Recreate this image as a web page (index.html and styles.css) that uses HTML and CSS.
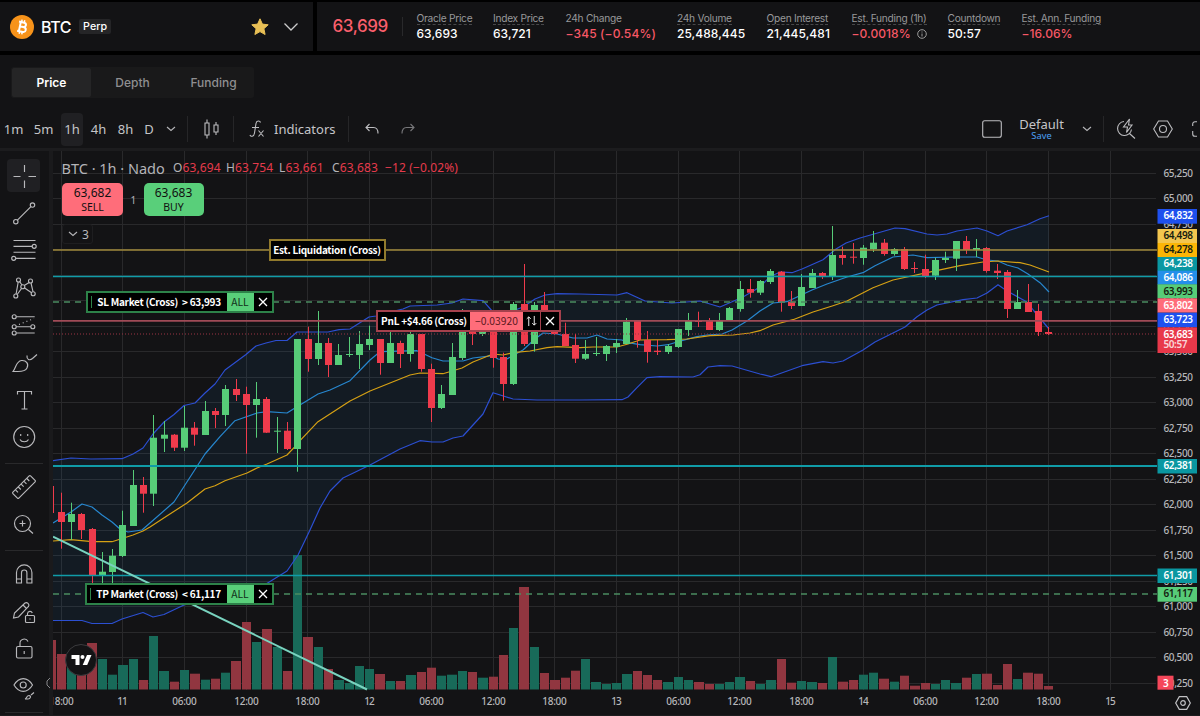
FILE: index.html
```
<!DOCTYPE html>
<html lang="en">
<head>
    <meta charset="UTF-8">
    <meta name="viewport" content="width=device-width, initial-scale=1.0">
    <title>BTC Perp</title>
    <link rel="stylesheet" href="styles.css">
</head>
<body>
    <header class="header">
        <div class="market">
            <svg class="coin" viewBox="0 0 24 24"><circle cx="12" cy="12" r="12" fill="#f7931a"/><g transform="rotate(12 12 12)" fill="none" stroke="#fff" stroke-width="2"><path d="M8 7.3h5.2a2.2 2.2 0 0 1 0 4.5H9.6M9.8 7v10M13.2 11.8h.6a2.4 2.4 0 0 1 0 4.9H8"/><path d="M10.6 4.8v2.5M13.3 4.8v2.5M10.6 16.7v2.5M13.3 16.7v2.5" stroke-width="1.5"/></g></svg>
            <span class="symbol">BTC</span>
            <span class="badge">Perp</span>
            <svg class="star" viewBox="0 0 18 18"><path d="M9 .8l2.4 5.3 5.8.7-4.3 3.9 1.2 5.8L9 13.6l-5.1 2.9 1.2-5.8L.8 6.8l5.8-.7z" fill="#e8bf55" stroke="#e8bf55" stroke-linejoin="round"/></svg>
            <svg class="market-arrow" viewBox="0 0 16 10"><path d="M1.5 1.5L8 8l6.500-6.500" fill="none" stroke="#ccc" stroke-width="1.300"/></svg>
        </div>
        <div class="stats">
            <div class="last-price">63,699</div>
            <div class="stat-list">
                <div class="stat"><span class="label">Oracle Price</span><b>63,693</b></div>
                <div class="stat"><span class="label">Index Price</span><b>63,721</b></div>
                <div class="stat"><span class="label plain">24h Change</span><b class="down wide">−345 (−0.54%)</b></div>
                <div class="stat"><span class="label">24h Volume</span><b>25,488,445</b></div>
                <div class="stat"><span class="label">Open Interest</span><b>21,445,481</b></div>
                <div class="stat"><span class="label">Est. Funding (1h)</span><b class="down">−0.0018% <svg class="info" viewBox="0 0 10 10"><circle cx="5" cy="5" r="4.300"/><path d="M5 4.500v3M5 2.500v1"/></svg></b></div>
                <div class="stat"><span class="label">Countdown</span><b>50:57</b></div>
                <div class="stat"><span class="label">Est. Ann. Funding</span><b class="down">−16.06%</b></div>
            </div>
        </div>
    </header>

    <main class="panel">
        <nav class="tabs">
            <button class="tab active">Price</button>
            <button class="tab">Depth</button>
            <button class="tab">Funding</button>
        </nav>

        <div class="toolbar">
            <div class="intervals">
                <span>1m</span><span>5m</span><span class="active">1h</span><span>4h</span><span>8h</span><span class="day">D</span>
            </div>
            <svg class="small-arrow" viewBox="0 0 10 6"><path d="M1 1l4 3.500L9 1"/></svg>
            <i class="sep"></i>
            <svg class="tool-icon candles" viewBox="0 0 16 20"><path d="M2 4h4v12H2zM4 .5V4M4 16v3.500M11 6h4v7h-4zM13 3v3M13 13v3"/></svg>
            <i class="sep"></i>
            <svg class="tool-icon fx" viewBox="0 0 16 20"><path d="M11.500 3.500C11 1.500 7.500 1 7 4.500L5.500 14c-.5 4-4 4-4.500 2M3 8.500h7M9.500 11.500l5 6M14.500 11.500l-5 6"/></svg>
            <span class="indicators">Indicators</span>
            <i class="sep"></i>
            <svg class="tool-icon undo" viewBox="0 0 14 12"><path d="M4.500 1L1 4.500 4.500 8M1 4.500h7.500c3 0 4.500 2.500 4.500 6"/></svg>
            <svg class="tool-icon redo" viewBox="0 0 14 12"><path d="M9.500 1L13 4.500 9.500 8M13 4.500H5.500C2.500 4.500 1 7 1 10.500"/></svg>
            <svg class="tool-icon layout" viewBox="0 0 20 18"><rect x=".7" y=".7" width="18.600" height="16.600" rx="2"/></svg>
            <div class="template"><span>Default</span><small>Save</small></div>
            <svg class="small-arrow" viewBox="0 0 10 6"><path d="M1 1l4 3.500L9 1"/></svg>
            <i class="sep"></i>
            <svg class="tool-icon search" viewBox="0 0 20 22"><path d="M8 3.500a7 7 0 1 0 7.500 8M13.500 15.500l5.500 5M13.500 1L7.500 9h4l-1 5.500L16 7h-3.500z"/></svg>
            <svg class="tool-icon settings" viewBox="0 0 20 18"><path d="M5.500 1h9L19.300 9l-4.800 8h-9L.7 9z"/><circle cx="10" cy="9" r="3.500"/></svg>
            <svg class="tool-icon full" viewBox="0 0 18 16"><path d="M5 .7H3A2.300 2.300 0 0 0 .7 3v2M.7 10v3A2.300 2.300 0 0 0 3 15.300h2"/></svg>
        </div>

        <div class="workspace">
            <aside class="sidebar">
                <div class="draw active"><svg viewBox="0 0 30 30"><path d="M4.500 15.500h7M19.500 15.500h7.500M15.500 4v7M15.500 19.500V27"/></svg></div>
                <div class="draw"><svg viewBox="0 0 30 30"><path d="M8.400 22.100L21.900 8.600"/><circle cx="23.500" cy="7" r="2.200"/><circle cx="6.800" cy="23.700" r="2.200"/></svg></div>
                <div class="draw"><svg viewBox="0 0 30 30"><path d="M4.500 5.500h22M4.500 11.300h18.500M4.500 17.200h22M7 23.300h19.500"/><circle cx="25.200" cy="11.300" r="2"/><circle cx="4.700" cy="23.300" r="2"/></svg></div>
                <div class="draw"><svg viewBox="0 0 30 30"><path d="M7.100 21L9.200 9M10.800 8.800l2.200 3.200M15.600 15l7 4.800M22 10l2 8.700M20.200 9.600l-5 3M12.500 15.500L8.200 21.500"/><circle cx="9.500" cy="7" r="2"/><circle cx="21.500" cy="8" r="2"/><circle cx="13.800" cy="13.700" r="2"/><circle cx="6.800" cy="23" r="2"/><circle cx="24.200" cy="20.700" r="2"/></svg></div>
                <div class="draw"><svg viewBox="0 0 30 30"><path d="M7.200 6.700h18.500M7.200 16.700h14.600M7.200 23h18.500"/><path d="M10 14.500L25 8.500" stroke-dasharray="1 3"/><circle cx="5.200" cy="6.700" r="2"/><circle cx="5.200" cy="16.700" r="2"/><circle cx="23.800" cy="16.700" r="2"/><circle cx="5.200" cy="23" r="2"/></svg></div>
                <div class="draw"><svg viewBox="0 0 30 30"><path d="M4 23.500C7 20 7 13 12.500 12.500c5-.4 7.500 3.500 5.500 7.500-1.500 3-5 3.500-9 3.500zM18 7.500c-.5 4 2.500 5.500 5.500 3L28 6.500"/></svg></div>
                <div class="draw"><svg viewBox="0 0 30 30"><path d="M8.500 9.500v-3h14v3M15.500 6.500V24M12.500 24h6"/></svg></div>
                <div class="draw"><svg viewBox="0 0 30 30"><circle cx="15.200" cy="15" r="10.500"/><path d="M11 17.500c1.500 3 7 3 8.500 0M11.700 12v2M18.700 12v2"/></svg></div>
                <hr>
                <div class="draw"><svg viewBox="0 0 30 30"><g transform="rotate(-45 15 15)"><rect x="2.500" y="10.800" width="25" height="8.400" rx="1"/><path d="M7 11v3.500M11 11v3.500M15 11v3.500M19 11v3.500M23 11v3.500"/></g></svg></div>
                <div class="draw"><svg viewBox="0 0 30 30"><circle cx="13.500" cy="13.500" r="8"/><path d="M19.500 19.500l4.500 4M10.500 13.500h6M13.500 10.500v6"/></svg></div>
                <hr>
                <div class="draw"><svg viewBox="0 0 30 30"><path d="M7.500 24V13.500a7.700 7.700 0 0 1 15.400 0V24h-5V13.700a2.700 2.700 0 0 0-5.400 0V24zM7.500 20h5M17.900 20h5"/></svg></div>
                <div class="draw"><svg viewBox="0 0 30 30"><path d="M4.500 21l1-5L16 6c2-1.500 5 1.500 3.500 3.500L9.500 20zM14 8l3.500 3.500"/><rect x="16.500" y="18.500" width="9" height="7" rx="1"/><path d="M18.500 18.500v-2a2.500 2.500 0 0 1 4.800-.5M21 21.500v1"/></svg></div>
                <div class="draw"><svg viewBox="0 0 30 30"><rect x="7.500" y="12.500" width="15.500" height="11.500" rx="1.500"/><path d="M11 12.500V9.500a4.200 4.200 0 0 1 8-2M15.200 17v3"/></svg></div>
                <div class="draw"><svg viewBox="0 0 30 30"><path d="M5 13c5-8.500 13.500-8.500 18.500 0-5 8.500-13.500 8.500-18.500 0z"/><circle cx="14.200" cy="13" r="3"/><path d="M16 27c2-.5 1.500-3.500 4-3.500 2.500.3 1.500 3.500-1 3.500zM22 23l3-2.500"/></svg></div>
                <hr>
            </aside>

            <section class="chart">
                <svg id="chart" viewBox="53 151 1147 565"></svg>

                <div class="legend">
                    <span class="name">BTC · 1h · Nado</span>
                    <span class="ohlc">O<em>63,694</em></span>
                    <span class="ohlc">H<em>63,754</em></span>
                    <span class="ohlc">L<em>63,661</em></span>
                    <span class="ohlc">C<em>63,683</em></span>
                    <span class="ohlc"><em>−12 (−0.02%)</em></span>
                </div>
                <div class="trade">
                    <button class="sell">63,682<small>SELL</small></button>
                    <span>1</span>
                    <button class="buy">63,683<small>BUY</small></button>
                </div>
                <div class="collapsed"><svg viewBox="0 0 10 6"><path d="M1 1l4 3.500L9 1"/></svg>3</div>

                <div class="order liquidation"><b>Est. Liquidation (Cross)</b></div>
                <div class="order stop"><i class="grip"></i><b>SL Market (Cross) &nbsp;&gt; 63,993</b><span class="size">ALL</span><svg class="close" viewBox="0 0 10 10"><path d="M1 1l8 8M9 1L1 9"/></svg></div>
                <div class="order take"><i class="grip"></i><b>TP Market (Cross) &nbsp;&lt; 61,117</b><span class="size">ALL</span><svg class="close" viewBox="0 0 10 10"><path d="M1 1l8 8M9 1L1 9"/></svg></div>
                <div class="order pnl"><b>PnL +$4.66 (Cross)</b><span class="size">−0.03920</span><svg class="swap" viewBox="0 0 12 12"><path d="M3 11.500V1.500M.8 3.700L3 1.500l2.200 2.200M9 .5v10M6.800 8.300L9 10.500l2.200-2.200"/></svg><svg class="close" viewBox="0 0 10 10"><path d="M1 1l8 8M9 1L1 9"/></svg></div>

                <div class="tv-logo"><svg viewBox="0 0 20 12"><path d="M0 1h8v10H4V5H0z" fill="#fff"/><circle cx="11" cy="3" r="2" fill="#fff"/><path d="M15.500 1H20l-4.300 10h-4.500z" fill="#fff"/></svg></div>
                <svg class="axis-settings" viewBox="0 0 16 14"><path d="M4.300.7h7.400L15.300 7l-3.600 6.300H4.300L.7 7z"/><circle cx="8" cy="7" r="2.300"/></svg>
            </section>
            <svg class="handle" viewBox="0 0 6 14"><path d="M5 2L2 5v4l3 3"/></svg>
        </div>
    </main>
    <script src="chart.js"></script>
</body>
</html>
```
FILE: styles.css
```
* {
    box-sizing: border-box;
}

body {
    margin: 0;
    width: 1200px;
    height: 716px;
    overflow: hidden;
    background: #000;
    color: #fff;
    font-family: Inter, sans-serif;
}

button {
    border: none;
    padding: 0;
    color: inherit;
    font-family: inherit;
}

svg {
    display: block;
    flex-shrink: 0;
}

/* header */
.header {
    display: flex;
    gap: 4px;
    padding: 2px 0 4px;
    height: 55px;
}

.market {
    display: flex;
    align-items: center;
    width: 313px;
    padding: 0 14px 0 10px;
    background: #131315;
}

.coin {
    width: 24px;
    height: 24px;
}

.symbol {
    margin-left: 7px;
    font-size: 16px;
    font-weight: 500;
    letter-spacing: -0.4px;
}

.badge {
    margin-left: 8px;
    padding: 0 4px;
    border-radius: 2px;
    background: #252527;
    font-size: 10.7px;
    line-height: 15px;
    font-weight: 500;
}

.star {
    width: 18px;
    height: 18px;
    margin-left: auto;
}

.market-arrow {
    width: 16px;
    height: 10px;
    margin-left: 14px;
}

.stats {
    display: flex;
    align-items: center;
    flex: 1;
    background: #131315;
}

.last-price {
    width: 86px;
    padding-left: 15.5px;
    border-right: 1px solid #29292b;
    color: #fa5f6c;
    font-size: 17px;
    line-height: 19px;
    font-weight: 500;
    letter-spacing: -0.4px;
}

.stat-list {
    display: grid;
    grid-template-columns: 76.5px 72.5px 111.5px 89.5px 85px 96px 74px auto;
    padding-left: 13.5px;
}

.stat {
    display: flex;
    flex-direction: column;
    align-items: flex-start;
    gap: 1px;
    white-space: nowrap;
}

.stat .label {
    border-bottom: 1px dashed #48484a;
    color: #98989a;
    font-size: 10.2px;
    line-height: 12px;
    letter-spacing: -0.28px;
}

.stat .plain {
    border-color: transparent;
}

.stat b {
    display: flex;
    align-items: center;
    gap: 6px;
    font-size: 12px;
    line-height: 16px;
    font-weight: 500;
    letter-spacing: 0.05px;
}

.stat .down {
    color: #f75866;
}

.stat .wide {
    letter-spacing: 0.12px;
}

.info {
    width: 10px;
    height: 10px;
    fill: none;
    stroke: #aaa;
    stroke-width: 0.9;
}

/* panel */
.panel {
    height: 661px;
    background: #131315;
}

.tabs {
    display: flex;
    width: 243px;
    height: 31px;
    margin-left: 11px;
    transform: translateY(12px);
    border-radius: 3px;
    background: #19191a;
}

.tab {
    width: 81px;
    border: 1px solid #19191a;
    border-radius: 3px;
    background: none;
    color: #8f8f91;
    font-size: 12px;
    font-weight: 500;
}

.tab.active {
    background: #252526;
    color: #fff;
    font-weight: 600;
}

.toolbar {
    display: flex;
    align-items: center;
    height: 36px;
    margin: 25px 0 1px;
    color: #c5c5c8;
    font-family: "Noto Sans", sans-serif;
    font-size: 13px;
}

.intervals {
    display: flex;
    align-items: center;
    width: 160px;
}

.intervals span {
    width: 27px;
    line-height: 33px;
    text-align: center;
}

.intervals span:nth-child(2) {
    width: 33px;
}

.intervals .active {
    width: 22px;
    margin: 0 2px 0 1px;
    border-radius: 4px;
    background: #202023;
}

.intervals .day {
    width: 20px;
}

.small-arrow,
.collapsed svg {
    width: 10px;
    height: 6px;
    fill: none;
    stroke: #b5b5b8;
    stroke-width: 1.1;
}

.intervals + .small-arrow {
    margin-left: 6px;
}

.sep {
    width: 1px;
    height: 26px;
    margin-left: 11px;
    background: #262628;
}

.tool-icon {
    fill: none;
    stroke: #bdbdc0;
    stroke-width: 1.1;
}

.candles {
    width: 16px;
    height: 20px;
    margin: 0 3px 0 15px;
}

.fx {
    width: 16px;
    height: 20px;
    margin-left: 15px;
}

.indicators {
    width: 61px;
    margin: 0 2px 0 9px;
}

.undo {
    width: 14px;
    height: 12px;
    margin-left: 16px;
}

.redo {
    width: 14px;
    height: 12px;
    margin-left: 22px;
    stroke: #77777a;
}

.layout {
    width: 20px;
    height: 18px;
    margin-left: auto;
}

.template {
    display: flex;
    flex-direction: column;
    align-items: center;
    width: 47px;
    margin: 0 17px 0 16px;
    line-height: 14px;
}

.template small {
    color: #4ba0f5;
    font-size: 9.3px;
    line-height: 10px;
}

.search {
    width: 20px;
    height: 22px;
    margin-left: 12px;
}

.settings {
    width: 20px;
    height: 18px;
    margin-left: 17px;
}

.full {
    width: 18px;
    height: 16px;
    margin: 0 -10px 0 19px;
}

.workspace {
    position: relative;
    display: flex;
    height: 568px;
    border-top: 3px solid #1c1c1e;
    border-bottom: 1px solid #1c1c1e;
}

.sidebar {
    display: flex;
    flex-direction: column;
    width: 53px;
    padding: 8px 0 0 7px;
    border-right: 4px solid #1a1a1c;
    overflow: hidden;
}

.draw {
    display: flex;
    flex-shrink: 0;
    align-items: center;
    justify-content: center;
    width: 33px;
    height: 33.4px;
    margin: 0 0 4px;
    border-radius: 4px;
}

.draw.active {
    background: #202023;
}

.draw svg {
    width: 30px;
    height: 30px;
    fill: none;
    stroke: #b9b9bc;
    stroke-width: 1.15;
}

.sidebar hr {
    flex-shrink: 0;
    width: 38px;
    height: 1px;
    margin: 5px 0 6.4px -2px;
    border: none;
    background: #29292b;
}

.handle {
    position: absolute;
    left: 45px;
    top: 525px;
    width: 6px;
    height: 14px;
    fill: none;
    stroke: #88888b;
}

/* chart */
.chart {
    position: relative;
    width: 1147px;
    height: 564px;
    overflow: hidden;
    font-family: "Noto Sans", sans-serif;
}

#chart {
    width: 1147px;
    height: 565px;
}

.grid {
    stroke: #29292b;
    stroke-width: 1;
}

.up {
    fill: #57cc78;
    stroke: #57cc78;
}

.down-candle {
    fill: #ef3b4c;
    stroke: #ef3b4c;
}

.body {
    stroke: none;
}

.vol-up {
    fill: #186a59;
}

.vol-down {
    fill: #913640;
}

.band {
    fill: #2196f3;
    fill-opacity: 0.065;
}

.line {
    fill: none;
    stroke-width: 1.2;
    stroke-linejoin: round;
}

.outer {
    stroke: #2c4fd2;
}

.basis {
    stroke: #2787cf;
}

.average {
    stroke: #d6a114;
}

.trend {
    stroke: #79d3bf;
    stroke-width: 2;
}

.axis-label {
    fill: #b7b7ba;
    font-size: 10px;
    font-weight: 500;
}

.tag-label {
    fill: #fff;
    font-size: 10px;
    font-weight: 600;
}

.dark {
    fill: #15200f;
}

.legend {
    position: absolute;
    left: 8.5px;
    top: 7px;
    display: flex;
    align-items: center;
    color: #b4b4b8;
    line-height: 20px;
    white-space: nowrap;
}

.name {
    width: 111.5px;
    font-size: 14.5px;
}

.ohlc {
    width: 53px;
    font-size: 12px;
    letter-spacing: 0.12px;
}

.ohlc em {
    color: #e63b4c;
    font-style: normal;
}

.trade {
    position: absolute;
    left: 9px;
    top: 32px;
    display: flex;
    align-items: center;
    font-size: 10px;
    color: #b4b4b8;
}

.trade span {
    width: 20.5px;
    text-align: center;
}

.trade button {
    width: 61px;
    height: 33px;
    border-radius: 5px;
    color: #111;
    font-size: 12px;
    line-height: 14px;
}

.trade small {
    display: block;
    font-size: 10.5px;
}

.trade .sell {
    background: #ff6d7a;
}

.trade .buy {
    width: 60px;
    background: #59cf7a;
}

.collapsed {
    position: absolute;
    left: 9px;
    top: 73px;
    display: flex;
    align-items: center;
    gap: 4px;
    width: 31px;
    height: 20px;
    padding-left: 5px;
    border: 1px solid #1e1e20;
    border-radius: 3px;
    color: #b9b9bc;
    font-size: 12px;
}

.order {
    position: absolute;
    display: flex;
    align-items: center;
    height: 22px;
    border: 2px solid #2d8249;
    background: #000;
    font-family: "Noto Sans CJK SC", sans-serif;
    font-size: 10px;
    line-height: 18px;
    white-space: nowrap;
}

.order b {
    flex: 1;
    text-align: center;
    font-weight: 600;
    letter-spacing: -0.27px;
}

.liquidation {
    left: 215.5px;
    top: 88px;
    width: 117px;
    border-color: #917a2d;
}

.stop {
    left: 32.5px;
    top: 140px;
    width: 188px;
}

.take {
    left: 31.5px;
    top: 432px;
    width: 189px;
}

.pnl {
    left: 323px;
    top: 159px;
    width: 185px;
    border-color: #a5414d;
}

.grip {
    width: 1px;
    height: 12px;
    margin-left: 3px;
    background: #2d8249;
}

.size {
    flex-shrink: 0;
    width: 27px;
    background: #59cf7a;
    color: #123019;
    font-size: 10.3px;
    text-align: center;
}

.pnl .size {
    width: 53px;
    background: #ff6d7a;
    color: #5b1820;
}

.close,
.swap {
    width: 18px;
    height: 18px;
    padding: 4px;
    fill: none;
    stroke: #fff;
    stroke-width: 1.3;
}

.swap {
    padding: 3px;
    stroke-width: 1;
    border-right: 1px solid #a5414d;
}

.tv-logo {
    position: absolute;
    left: 12px;
    top: 493px;
    display: flex;
    align-items: center;
    justify-content: center;
    width: 32px;
    height: 32px;
    border: 1px solid #3b3b3e;
    border-radius: 50%;
    background: #131315;
}

.tv-logo svg {
    width: 21px;
    height: 12px;
}

.axis-settings {
    position: absolute;
    left: 1122px;
    top: 545px;
    width: 16px;
    height: 14px;
    fill: none;
    stroke: #c0c0c3;
    stroke-width: 1.2;
}
```
FILE: chart.js
```
const svg = document.getElementById('chart');
const NS = 'http://www.w3.org/2000/svg';
const BASE = 689.5; // bottom of the volume bars

function add(tag, attrs, text) {
    const el = document.createElementNS(NS, tag);
    for (const key in attrs) el.setAttribute(key, attrs[key]);
    if (text) el.textContent = text;
    svg.appendChild(el);
    return el;
}

// direction, high, body top, body bottom, low, volume top
const candles = `
d 486 486 513 513 640|d 492.7 512 522 548.7 654|u 502.7 514 522 540 660|d 513 514 530 539 665
d 528 529 576 584 643|u 552 571.7 575 585 659|u 549 555.7 572 585 674.7|u 510.7 525 556 557 665
u 470 485 526 526 659|d 477 485 493.7 512.7 680|u 415 437.7 493.7 506 636|u 421 434.7 438.7 452 671
d 434 434.7 447.7 451 681.7|u 406 427.7 447.7 451 670|d 422 427.7 434.7 445.7 673.7|u 401 411 435 435 679.7
d 408 411 415 428 678.7|u 385 389 415 426 672.7|d 379 389 395 401 661|d 386.7 394 405 453.7 622
u 382 399 405 437.7 642|d 397 399 432.7 433 629|u 417 430.7 431.7 453 647|d 422 430.7 449 450 671
u 339 339 449 471.7 555|d 326.7 339 359 371.7 637|u 311 343 359 365 647|d 338 343 365 377 669
u 344 355 365 365 680|u 337 354 355 357 683|u 331 344 355 369 666|u 325.7 339 345 350 669
d 339 339 363 374.7 674|u 330 343 363 363 681|d 340.7 343 354 368 681|u 325 334 354 361.7 675
d 334 334 369 371.7 672|d 363.7 369 408 422 667.7|u 385 394 408 409 675.7|u 343 357 395 395 674.7
u 309 316 358 360 671|d 318 322 334 345 672|u 318 322 334 336 677.7|d 318 322 358 367.7 676.7
d 352.7 357 384 400.7 655|u 302 304 384 385 628|d 264 304 344 346 587|u 302 305 344 351.7 647
d 292 305 322 322 673|d 322 322 334 335 680|d 322.7 334 346 346 677.7|d 334 345 358.7 363 670.7
u 340 354 358.7 360 659|u 337 353 354 356 682|u 345 346 354 361 684|u 339 343 347 353 683
u 318 321.7 344 344 674|d 320 320.7 340 347.7 671|d 331 340 352 362.7 675|d 339.7 350.7 352 355 680
u 344 346 352 354 682|u 329 329 347 348 677|u 313 320 330 336 680|d 311.7 320 322 327 682
d 318 320.7 330 330 684|u 313 321 330 331 684|u 307 308 321 321 682|u 281 289 309 311.7 677
d 279 289 292.7 297.7 681|u 280 281 292.7 295 684|u 269 271 282 284 680|d 271 271.7 302 311.7 659
d 291 301.7 306 309 682.7|u 274 287 306 306 681|u 269 273 288 288 682|d 272 273 276.7 279 683
u 226 255 276.7 280 657|d 246.7 255 258 264.7 681.7|d 243 256.7 257.7 263.7 680|u 245 247.7 258 264.7 674.7
u 231 242.7 249 252 672.7|d 239 242.7 254 255.7 678.7|u 248 249 254 255.7 681.7|d 247 249 269 270 675.7
d 262 268 269 273 685.7|d 254.7 269 276 278 683|u 257.7 260 275.7 280 684|u 251.7 258 260 263 680
u 241 241 258.7 271 683|d 236 241 250 254 677.7|u 239 248 250 257 674|d 247 248 271 272.7 673.7
d 264 270.7 273 279 685|d 270 272 309 318 664|u 290 302 309 309 679|d 284 302 312 312 672.7
d 304 311 332 336 673.7|d 327 332 334 335 686
`.trim().split(/[|\n]/).map(row => row.split(' '));

const upper = '53,460.7 71,458 91,459 122,458.7 133,454 143,448 153,434 164,422 174,414.5 184,405.5 195,403 205,393 215,384 225,370 246,354.5 256,346 266,343 276,340.5 287,340.5 297,332 328,332 339,329.7 350,329 369,317 376,316 390,312 403,309 410,306 437,305 452,303 463,299 483,300.7 493,312 510,312 523,307 535,299 545,295 557,293.7 580,294 617,295 627,292.7 645,301 672,303 700,301 720,307 743,297 760,287 770,276.7 780,272 792,272.7 802,269 823,259.7 836,249 846,243 860,238 874,234 895,228 905,228.7 927,234 937,235 947,234 957,231 977,228 987,231 998,235.7 1007,231 1027,224.7 1040,218.7 1049,215.7';
const lower = '53,620.5 82,620.5 92,623.5 112,623.5 122,619 143,612.5 153,617 164,614.5 184,605 225,596 266,584 287,571 298,555 310,530 320,508 330,491 343,478 370,465 385,457 400,449 420,440.7 432,442 443,442 453,438 463,436 473,425 483,414 493,392.7 513,399 537,400 580,400 622,399.7 628,397 637,387.7 647,377.7 660,376.7 693,377 700,374.7 708,367 720,365.7 732,366 760,374 771,376.7 802,365.7 823,361.7 833,363 843,361 863,350 875,342 893,333 905,327 917,316.7 927,310 937,305 963,299.7 977,298 987,293 998,284.7 1007,291 1027,302 1034,311 1049,329';
const basis = '53,523 71,512 82,504 92,507 102,515 112,522 120,529 128,532 142,530 174,502 185,485 205,454 220,436.7 235,420.7 257,413 267,411.7 287,413 295,408 318,394 330,390 350,380.7 370,360 380,351.7 417,350.7 422,353 432,357.7 443,361 463,361 473,358 493,355.7 498,359 505,360 523,350 535,339 543,333 557,334 573,338 587,338 597,335 607,339 622,340 628,342.7 640,344.7 657,346 668,344.7 678,341.7 697,336.7 707,335 722,334 732,330 747,321 760,311 773,303 787,301.7 797,297 812,290 827,284 847,277 863,272.7 875,265.7 893,257 913,255 927,257.7 957,257 977,257 987,260 998,261 1007,265 1018,268 1028,274 1040,282.7 1049,292';
const average = '53,541 71,539.7 92,541.7 112,541.7 133,535 143,531 150,527 163,518.5 173,512 187,503 205,489 215,485.7 225,480.7 247,473 257,468 267,464 287,455 295,446.7 300,440.7 318,421.7 350,401 370,391 410,375 420,373 443,373.7 462,368 473,362 493,354 503,355 513,352.7 530,351 547,347.7 557,346.7 580,347.7 593,347 617,347 628,344 640,340 667,339.7 687,339 710,335.7 733,335 750,333 760,330.7 773,325 793,319.7 813,312 833,305.7 847,301 873,287.7 893,280 927,272.7 960,265.7 983,262 998,261 1020,262.7 1030,265 1049,272';

// grid and axis labels
for (let i = 0; i <= 20; i++) {
    const y = Math.floor(173.4 + i * 25.48) + 0.5;
    add('path', { class: 'grid', d: `M53 ${y}H1156` });
    add('text', { class: 'axis-label', x: 1163.5, y: y + 3, textLength: 29.5 }, (65250 - i * 250).toLocaleString('en-US'));
}
const times = ['18:00', '11', '06:00', '12:00', '18:00', '12', '06:00', '12:00', '18:00', '13', '06:00', '12:00', '18:00', '14', '06:00', '12:00', '18:00', '15'];
times.forEach((time, i) => {
    const x = Math.floor(61 + i * 61.72) + 0.5;
    add('path', { class: 'grid', d: `M${x} 151V690` });
    add('text', { class: 'axis-label', x: x, y: 705, 'text-anchor': 'middle', textLength: time.length > 2 ? 24.5 : 10.5 }, time);
});

const barX = i => 61.2 + (i - 1) * 10.286;
candles.forEach((c, i) => {
    const left = Math.max(53, Math.round(barX(i) - 4.6));
    const right = Math.round(barX(i) + 4.7);
    add('rect', { class: c[0] === 'u' ? 'vol-up' : 'vol-down', x: left, y: c[5], width: right - left, height: BASE - c[5] });
});

add('polygon', { class: 'band', points: upper + ' ' + lower.split(' ').reverse().join(' ') });

// price levels
function level(y, color, width, dash) {
    add('path', { d: `M53 ${y}H1157`, stroke: color, 'stroke-width': width, 'stroke-dasharray': dash || 'none' });
}
add('polyline', { class: 'line outer', points: upper });
add('polyline', { class: 'line outer', points: lower });
add('polyline', { class: 'line basis', points: basis });
add('polyline', { class: 'line average', points: average });

candles.forEach((c, i) => {
    const x = Math.round(barX(i) - 0.5) + 0.5;
    const cls = c[0] === 'u' ? 'up' : 'down-candle';
    add('path', { class: cls, d: `M${x} ${c[1]}V${c[4]}` });
    add('rect', { class: cls + ' body', x: x - 3.5, y: c[2], width: 7, height: Math.max(1, c[3] - c[2]) });
});

level(250, '#a18a3d', 1.7);
level(276.5, '#109ca8', 1.6);
level(302, '#4b8c60', 1.4, '6 5');
level(320.8, '#a04b57', 1.7);
level(334, '#9b3444', 1.1, '1 2');
level(466, '#109ca8', 1.8);
level(575.5, '#109ca8', 1.6);
level(594, '#4b8c60', 1.4, '6 5');
add('path', { class: 'line trend', d: 'M53 536.7L367 689.5' });

// price tags: top, height, colour, text, dark text
const tags = [
    [209, 14.7, '#1e50ee', '64,832'],
    [229, 14, '#f3c64f', '64,498', 1],
    [243, 14, '#fbb506', '64,278', 1],
    [257, 14, '#0a97a1', '64,238'],
    [270.7, 14, '#248fea', '64,086'],
    [284.3, 14, '#57cc78', '63,993', 1],
    [298.3, 14.4, '#ff6d7a', '63,802'],
    [312.7, 14.6, '#1e50ee', '63,723'],
    [327.3, 25.7, '#e8384a', '63,683'],
    [459, 14.5, '#0a97a1', '62,381'],
    [568.5, 14.5, '#0a97a1', '61,301'],
    [587, 14.7, '#57cc78', '61,117', 1],
];
tags.forEach(([y, h, color, text, dark]) => {
    add('rect', { x: 1157.5, y: y, width: 39.5, height: h, fill: color });
    add('text', { class: dark ? 'tag-label dark' : 'tag-label', x: 1163.5, y: y + 10.4, textLength: 29.5 }, text);
});
add('text', { class: 'tag-label', x: 1163.5, y: 348.3, 'fill-opacity': 0.8, textLength: 24 }, '50:57');
add('rect', { x: 1157.5, y: 675.7, width: 16, height: 14, fill: '#f5475a' });
add('text', { class: 'tag-label', x: 1163, y: 686.5 }, '3');
```
